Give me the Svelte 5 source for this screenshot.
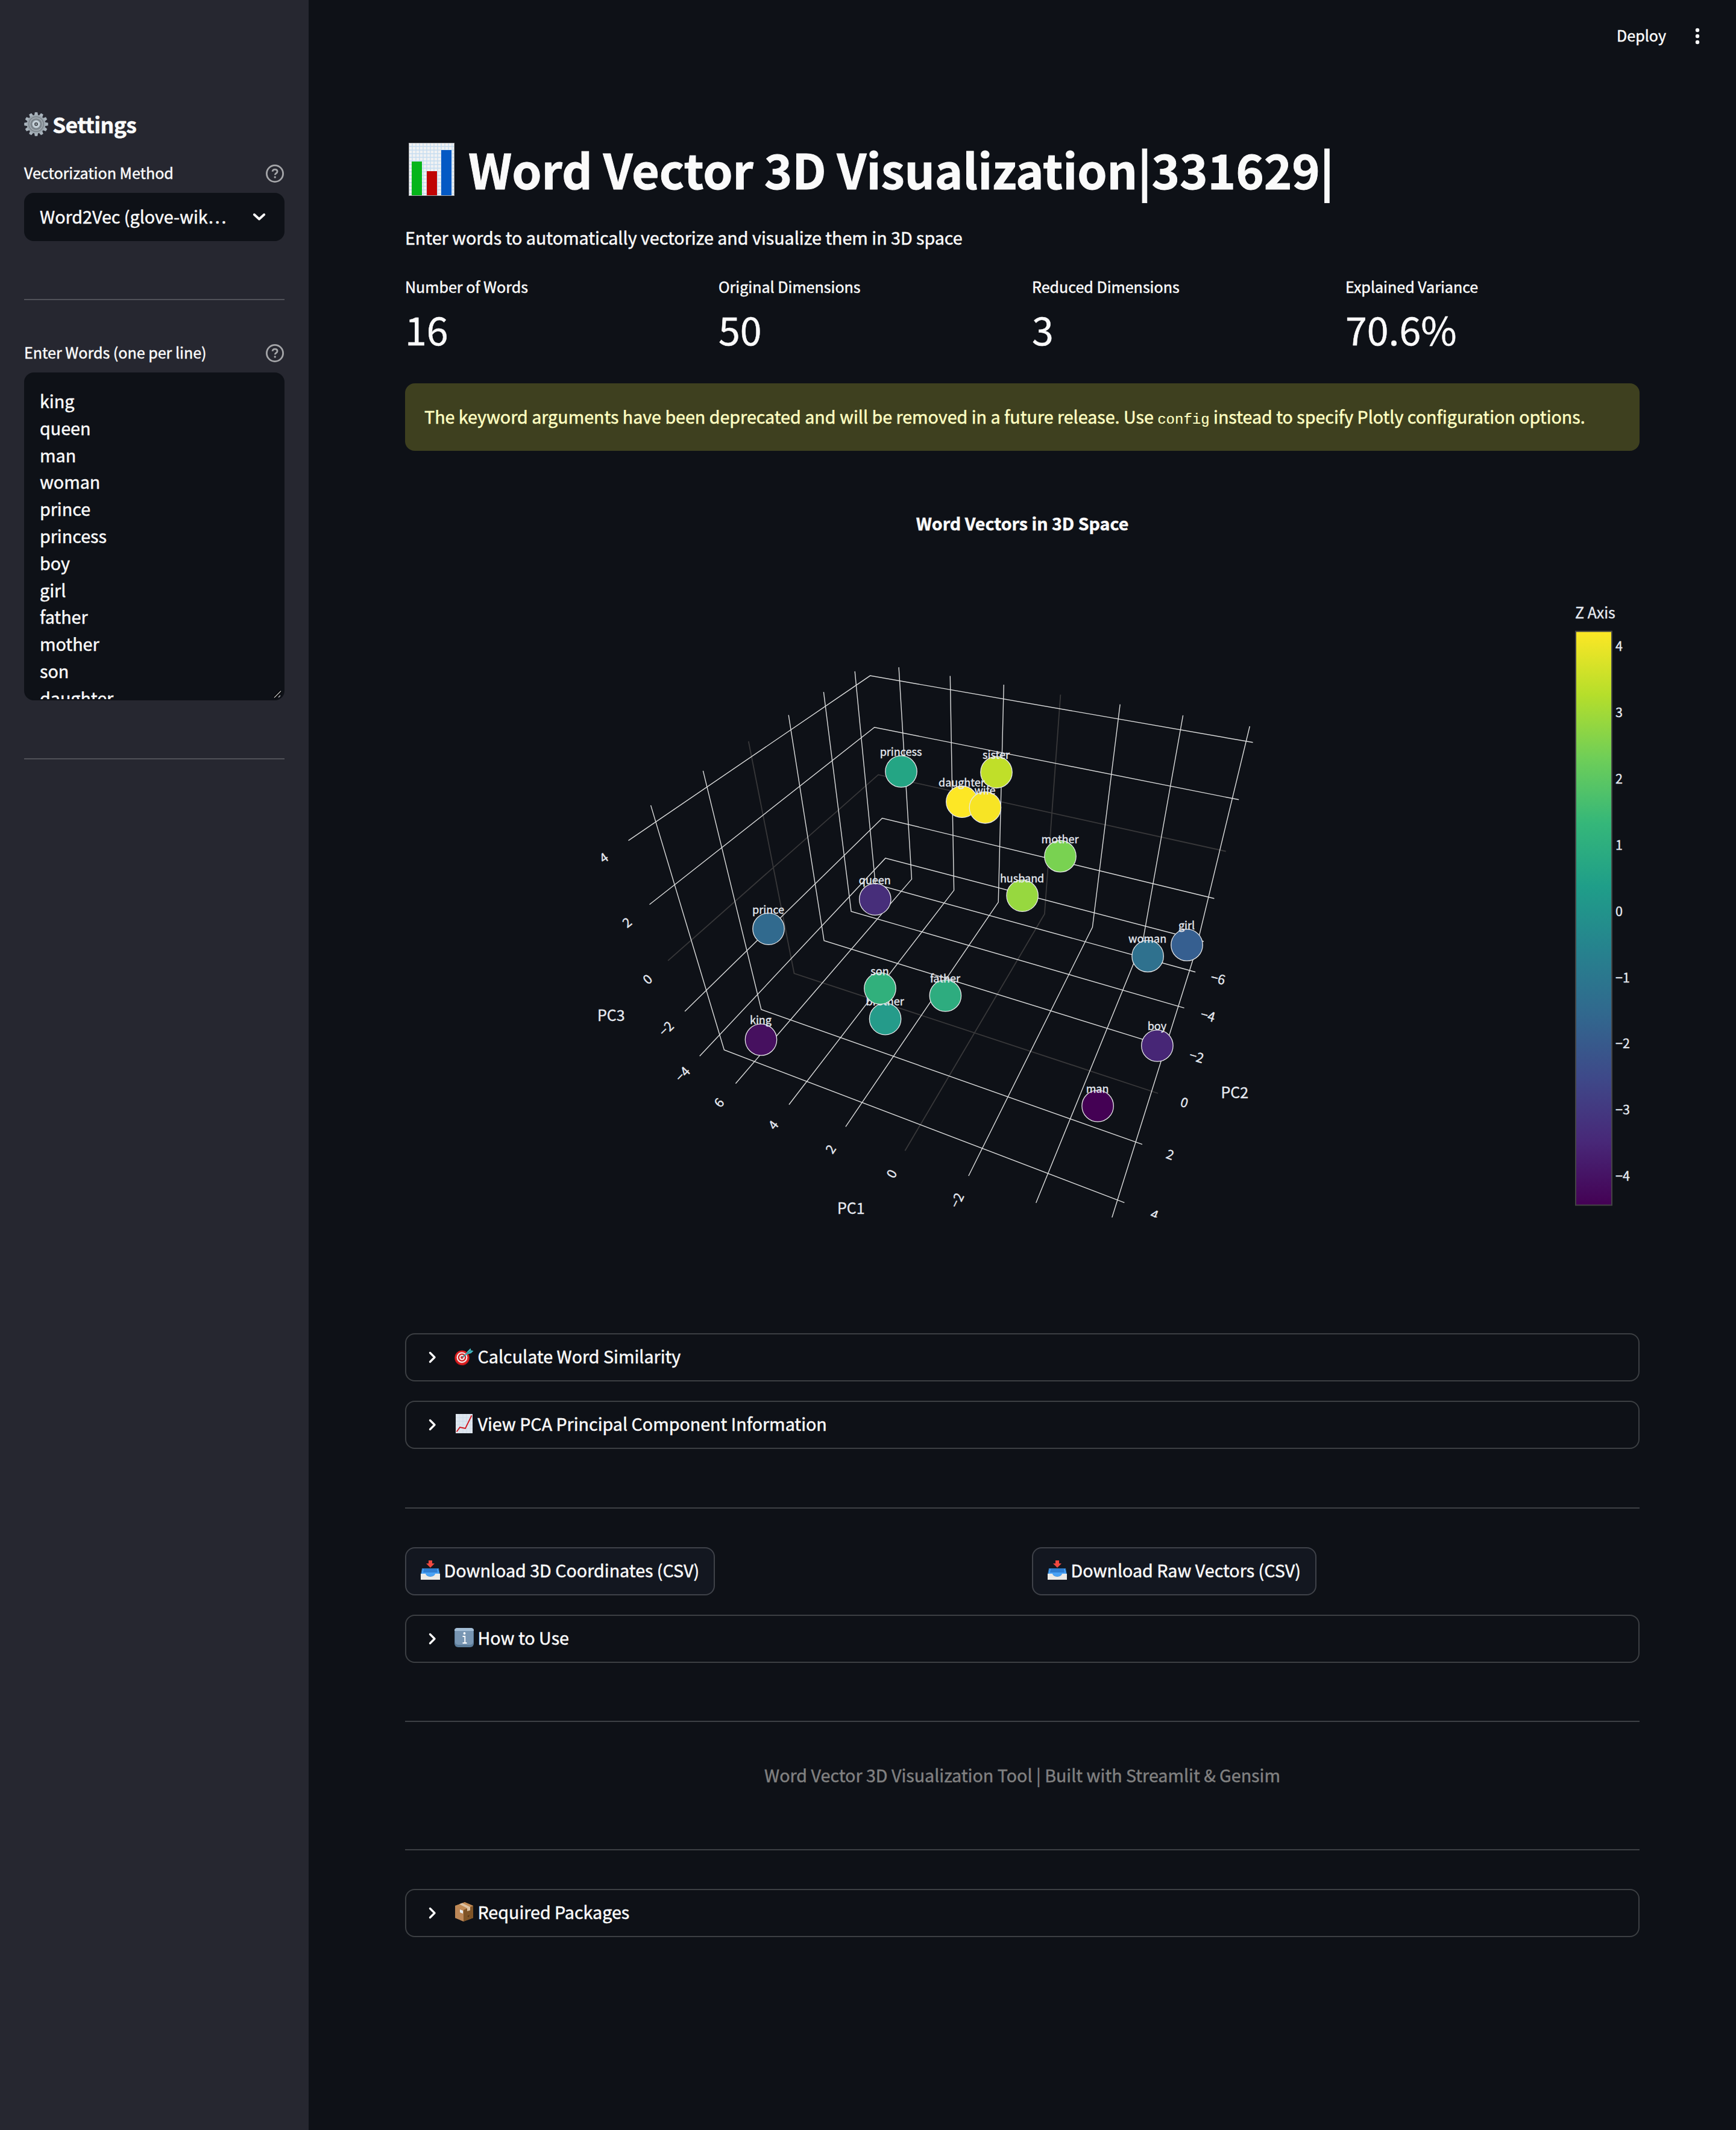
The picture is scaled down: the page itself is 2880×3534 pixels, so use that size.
<script>
  const words = ['king', 'queen', 'man', 'woman', 'prince', 'princess', 'boy', 'girl', 'father', 'mother', 'son', 'daughter'];

  const metrics = [
    { label: 'Number of Words', value: '16' },
    { label: 'Original Dimensions', value: '50' },
    { label: 'Reduced Dimensions', value: '3' },
    { label: 'Explained Variance', value: '70.6%' }
  ];

  // Grid lines of the three back planes; zero lines are drawn dark.
  const grid = [
    { zero: true, pts: '1108.2,1593.9 1457.1,1285.4 2033.8,1412.5' },
    { zero: true, pts: '1241.8,1230 1317.5,1615 1921.1,1814' },
    { zero: true, pts: '1759.4,1152.5 1732.9,1516.4 1501.4,1909.3' },
    { pts: '1042.5,1394.6 1443.6,1121.1 2078.5,1231.8' },
    { pts: '1077.5,1500.7 1450.7,1206.8 2055.2,1326.8' },
    { pts: '1136.1,1678 1463.6,1357.5 2014.4,1490.7' },
    { pts: '1160.7,1752.3 1468.9,1423.9 1997,1562' },
    { pts: '1079.6,1336.1 1201.4,1742 1865.4,1995.3' },
    { pts: '1166.4,1278.9 1262.9,1675 1895,1898.7' },
    { pts: '1308.2,1186.4 1367.1,1560.7 1944,1739.4' },
    { pts: '1366.4,1148.2 1412.1,1512.1 1964.6,1672.3' },
    { pts: '1418.2,1113.9 1452.3,1467 1983.2,1612.7' },
    { pts: '1491.1,1107.1 1512.5,1458.6 1220.4,1797.7' },
    { pts: '1576.3,1121.4 1582.6,1477.1 1308.9,1832.7' },
    { pts: '1665.3,1136.1 1656.2,1496.8 1402.9,1869.3' },
    { pts: '1858.2,1168.6 1812.4,1538.2 1606.8,1951' },
    { pts: '1962.6,1186.8 1896,1561 1718.7,1995.7' },
    { pts: '2073.3,1205 1982.3,1582 1844.8,2020' }
  ];

  const points = [
    { name: 'princess', x: 1495, y: 1280, c: '#24a584' },
    { name: 'sister', x: 1653, y: 1281.3, c: '#c0df29' },
    { name: 'daughter', x: 1595.9, y: 1330.2, c: '#fde725' },
    { name: 'wife', x: 1634.4, y: 1339.8, c: '#f7e425' },
    { name: 'mother', x: 1759, y: 1420.7, c: '#79d251' },
    { name: 'husband', x: 1696.1, y: 1486.1, c: '#97d83f' },
    { name: 'queen', x: 1451.8, y: 1492.1, c: '#472e7a' },
    { name: 'prince', x: 1275, y: 1541.1, c: '#316a8e' },
    { name: 'girl', x: 1969, y: 1567.9, c: '#365f90' },
    { name: 'woman', x: 1904.1, y: 1586.4, c: '#2f718e' },
    { name: 'brother', x: 1468.6, y: 1690.6, c: '#259b8a' },
    { name: 'son', x: 1460, y: 1640, c: '#31b07c' },
    { name: 'father', x: 1568.4, y: 1652, c: '#2eac7f' },
    { name: 'king', x: 1262.5, y: 1725, c: '#46105f' },
    { name: 'boy', x: 1919.9, y: 1735, c: '#472676' },
    { name: 'man', x: 1821.1, y: 1835, c: '#440154' }
  ];

  // Labels are centred on their ink box, so names with descenders sit higher.
  const lift = (name) => (/[gpqy]/.test(name) ? 25.6 : 22.2);

  const ticks = [
    { t: '4', x: 1001.5, y: 1422.9, r: -35 },
    { t: '2', x: 1040, y: 1530.2, r: -39 },
    { t: '0', x: 1074, y: 1624.6, r: -42 },
    { t: '−2', x: 1105.3, y: 1706.7, r: -44 },
    { t: '−4', x: 1132.4, y: 1782, r: -47 },
    { t: '6', x: 1192.6, y: 1829.3, r: -50 },
    { t: '4', x: 1282.8, y: 1866.3, r: -53 },
    { t: '2', x: 1378, y: 1906.3, r: -56 },
    { t: '0', x: 1479, y: 1947.3, r: -60 },
    { t: '−2', x: 1587.6, y: 1991.5, r: -64 },
    { t: '−6', x: 2020.7, y: 1623.5, r: 14 },
    { t: '−4', x: 2004, y: 1685, r: 16 },
    { t: '−2', x: 1985.2, y: 1753, r: 17 },
    { t: '0', x: 1965, y: 1829, r: 18 },
    { t: '2', x: 1941.3, y: 1915.5, r: 20 },
    { t: '4', x: 1915.2, y: 2015, r: 22 }
  ];

  const viridis = ['#fde725', '#b5de2b', '#6ece58', '#35b779', '#1f9e89', '#26828e', '#31688e', '#3e4989', '#482878', '#440154'];
  const barTicks = ['4', '3', '2', '1', '0', '−1', '−2', '−3', '−4'];
  const teeth = Array.from({ length: 12 }, (_, i) => i * 30);
</script>

{#snippet help()}
  <svg class="help" viewBox="0 0 32 32" width="32" height="32">
    <circle cx="16" cy="16" r="13.6" />
    <path d="M12 12.6c.3-2.200 1.900-3.500 4.100-3.500 2.400 0 4 1.300 4 3.300 0 1.700-1 2.500-2.100 3.300-1 .7-1.700 1.300-1.700 2.600" />
    <circle class="dot" cx="16.200" cy="22" r="1.700" />
  </svg>
{/snippet}

{#snippet icon(name)}
  <svg class="emoji" viewBox="0 0 32 32">
    {#if name === 'target'}
      <circle cx="12.500" cy="19" r="12.300" fill="#b9141a" />
      <circle cx="12.500" cy="18.300" r="11.500" fill="#dc2222" />
      <circle cx="12.500" cy="18.300" r="8.900" fill="#f4e9e9" />
      <circle cx="12.500" cy="18.300" r="6.700" fill="#d52020" />
      <circle cx="12.500" cy="18.300" r="4.500" fill="#f4e9e9" />
      <circle cx="12.500" cy="18.300" r="2.300" fill="#d52020" />
      <path d="M12.500 18.300 24 9" stroke="#3b8f96" stroke-width="1.800" />
      <path d="M18 12.500l4-5 4.500-4.500 1 3.500 4 .8-4 4-5 1.200-3.500 2z" fill="#44b5bd" />
      <path d="M20 12l8-5.500" stroke="#19737b" stroke-width="1" />
    {:else if name === 'trend'}
      <rect x="2" y="0" width="28" height="32" fill="#dfe7ef" />
      <path d="M2 6h28M2 12h28M2 18h28M2 24h28M8 0v32M14 0v32M20 0v32M26 0v32" stroke="#c9d9e8" stroke-width=".8" />
      <path d="M3.500 29.500 9 22l9 2L28.500 2.500" fill="none" stroke="#d0141c" stroke-width="1.800" />
    {:else if name === 'tray'}
      <path d="M2 13h28l2 10v8.500H0V23z" fill="#2b6fae" />
      <path d="M3 14h26l2 9-8 .5c-1 4-13 4-14 0L1 23z" fill="#4aa2f5" />
      <path d="M5 14h22l1 6H4z" fill="#2f7ed2" />
      <path d="M0 22h8c2 6.500 14 6.500 16 0h8v10H0z" fill="#eceae6" />
      <path d="M13 0h6v5h4l-7 7-7-7h4z" fill="#f0483f" />
    {:else if name === 'info'}
      <rect width="32" height="32" rx="6" fill="#5b7c9a" />
      <rect x="1" y="0" width="30" height="28" rx="5" fill="#7896b3" />
      <path d="M4 0h24a4 4 0 0 1 4 5H0a4 4 0 0 1 4-5z" fill="#a3bed6" />
      <circle cx="16.500" cy="9" r="1.900" fill="#fff" />
      <path d="M13.500 14h3.800v10.500M13.500 25h7" fill="none" stroke="#fff" stroke-width="1.800" />
    {:else if name === 'package'}
      <path d="M1 6 17 0l14 6v20L15 32 1 26z" fill="#b5814f" />
      <path d="M1 6 17 0l14 6-16 7z" fill="#c08a55" />
      <path d="M15 13 31 6v20l-16 6z" fill="#7f5427" />
      <path d="M1 6l14 7v19L1 26z" fill="#bd8858" />
      <path d="M8 3.200 12.500 1.600 26 8v5.500l-5 1.500v-5z" fill="#dcc3a6" />
      <path d="M9 12l5 2v5l-5-2z" fill="#e8eff2" />
      <path d="M21 23l4-2-1.500 4z" fill="#56371a" />
    {/if}
  </svg>
{/snippet}

{#snippet expander(name, label)}
  <div class="expander">
    <svg class="chev" viewBox="0 0 16 24" width="16" height="24"><path d="M3.500 4.500 11 12l-7.500 7.500" /></svg>
    {@render icon(name)}
    <span>{label}</span>
  </div>
{/snippet}

<div class="app">
  <aside>
    <h2>
      <svg class="gear" viewBox="-20 -20 40 40" width="40" height="40">
        {#each teeth as a}
          <path d="M-3.200-14 L-2.200-19.800 H2.200 L3.200-14z" transform="rotate({a})" fill="#a9b4bd" />
        {/each}
        <circle r="15.500" fill="#9ba5ad" />
        <circle r="13" fill="#7d868d" />
        <circle r="10.500" fill="none" stroke="#a4adb4" stroke-width="1.500" />
        <circle r="6.500" fill="#c4d0d8" />
        <circle r="3" fill="#4b4f54" />
        <circle r="1.200" fill="#a9b4bd" />
      </svg>
      <span>Settings</span>
    </h2>
    <div class="field-label"><span>Vectorization Method</span>{@render help()}</div>
    <div class="select">
      <span>Word2Vec (glove-wik…</span>
      <svg viewBox="0 0 24 16" width="24" height="16"><path d="M3.800 4 12 11.500 20.200 4" /></svg>
    </div>
    <hr />
    <div class="field-label"><span>Enter Words (one per line)</span>{@render help()}</div>
    <div class="textarea">
      {#each words as w}<div>{w}</div>{/each}
      <svg class="grip" viewBox="0 0 16 16" width="16" height="16">
        <path d="M2 13.500 13 2.500" stroke="#000" stroke-width="4" /><path d="M2 13.500 13 2.500M9 13l3-3" stroke="#b9babc" stroke-width="1.400" />
      </svg>
    </div>
    <hr />
  </aside>

  <main>
    <header>
      <span>Deploy</span>
      <svg viewBox="0 0 12 32" width="12" height="32"><circle cx="6" cy="6" r="3.200" /><circle cx="6" cy="16" r="3.200" /><circle cx="6" cy="26" r="3.200" /></svg>
    </header>

    <section class="content">
      <h1>
        <svg viewBox="0 0 76 88" width="76" height="88">
          <rect x=".5" y=".5" width="75" height="87" fill="#f1f2f3" stroke="#a8aaad" />
          {#each [6, 12, 18, 24, 30, 36, 42, 48, 54, 60, 66, 72] as g}
            <path d="M{g} 1V87M1 {g}H75" stroke="#c6ddf0" stroke-width="1.400" />
          {/each}
          <path d="M1 78H75M1 84H75" stroke="#c6ddf0" stroke-width="1.400" />
          <rect x="5" y="31" width="17" height="56" fill="#06b51a" />
          <rect x="30" y="47" width="17" height="40" fill="#c00404" />
          <rect x="54" y="12" width="17" height="75" fill="#0459c4" />
        </svg>
        <span>Word Vector 3D Visualization|331629|</span>
      </h1>
      <p class="lead">Enter words to automatically vectorize and visualize them in 3D space</p>

      <div class="metrics">
        {#each metrics as m}
          <div>
            <div class="m-label">{m.label}</div>
            <div class="m-value">{m.value}</div>
          </div>
        {/each}
      </div>

      <div class="alert">
        <p>The keyword arguments have been deprecated and will be removed in a future release. Use <code>config</code> instead to specify Plotly configuration options.</p>
      </div>

      <svg class="plot" viewBox="672 748 2048 1464" width="2048" height="1464">
        <defs>
          <linearGradient id="viridis" x1="0" y1="0" x2="0" y2="1">
            {#each viridis as c, i}<stop offset={i / 9} stop-color={c} />{/each}
          </linearGradient>
          <clipPath id="scene"><rect x="672" y="900" width="1930" height="1120" /></clipPath>
        </defs>
        <text class="title" x="1696" y="880">Word Vectors in 3D Space</text>
        <g clip-path="url(#scene)">
          {#each grid as l}<polyline class:zero={l.zero} points={l.pts} />{/each}
          {#each ticks as t}
            <text class="tick mid" transform="translate({t.x} {t.y}) rotate({t.r})" y="8">{t.t}</text>
          {/each}
          {#each points as p}
            <circle cx={p.x} cy={p.y} r="26.200" fill={p.c} />
            <text class="name" x={p.x - 0.5} y={p.y - lift(p.name)}>{p.name}</text>
          {/each}
        </g>
        <text class="axis" x="991" y="1694">PC3</text>
        <text class="axis" x="1389" y="2014">PC1</text>
        <text class="axis" x="2025.500" y="1822">PC2</text>
        <text class="axis" x="2613" y="1025.800">Z Axis</text>
        <rect x="2614" y="1047.500" width="60" height="952" fill="url(#viridis)" stroke="#444" stroke-width="2" />
        {#each barTicks as t, i}<text class="tick" x="2680" y={1080 + i * 109.900}>{t}</text>{/each}
      </svg>

      <div class="stack">
        {@render expander('target', 'Calculate Word Similarity')}
        {@render expander('trend', 'View PCA Principal Component Information')}
      </div>
      <hr class="wide" />
      <div class="downloads">
        <div><button>{@render icon('tray')}<span>Download 3D Coordinates (CSV)</span></button></div>
        <div><button>{@render icon('tray')}<span>Download Raw Vectors (CSV)</span></button></div>
      </div>
      {@render expander('info', 'How to Use')}
      <hr />
      <p class="credit">Word Vector 3D Visualization Tool | Built with Streamlit &amp; Gensim</p>
      <hr class="tight" />
      {@render expander('package', 'Required Packages')}
    </section>
  </main>
</div>

<style>
  :global(body) { margin: 0; background: #0e1117; }
  * { box-sizing: border-box; }
  .app {
    display: flex;
    width: 2880px;
    height: 3534px;
    overflow: hidden;
    background: #0e1117;
    color: #fafafa;
    font-family: "Noto Sans CJK SC", "Noto Sans", sans-serif;
    font-size: 28.65px;
    white-space: nowrap;
    -webkit-text-stroke: 0.5px currentColor;
  }
  h1, h2, p { margin: 0; }
  svg { flex: none; display: block; }
  hr { margin: 96px 0 64px; border: 0; height: 2px; background: #3d4045; }
  hr.wide { margin-top: 97px; }

  aside { width: 512px; padding: 182px 40px 0; background: #262730; flex: none; }
  aside hr { background: #505158; margin: 96px 0 66px; }
  h2 { display: flex; gap: 7px; height: 48px; font-size: 35.500px; line-height: 48px; font-weight: 700; letter-spacing: -0.55px; margin-bottom: 36px; }
  .gear { margin-top: 4px; }
  .field-label { display: flex; justify-content: space-between; height: 40px; line-height: 40px; font-size: 25.05px; margin-bottom: 14px; }
  .help { fill: none; stroke: #a5a6a9; stroke-width: 2.800; margin-top: 6px; }
  .help .dot { fill: #a5a6a9; stroke: none; }
  .select { display: flex; justify-content: space-between; height: 80px; padding: 0 30px 0 26px; background: #0e1117; border-radius: 16px; line-height: 78px; }
  .select svg { margin-top: 32px; fill: none; stroke: #fafafa; stroke-width: 3.900; stroke-linecap: round; stroke-linejoin: round; }
  .textarea { position: relative; height: 544px; padding: 23px 24px 0; border: 2px solid #0e1117; border-radius: 16px; background: #0e1117; overflow: hidden; line-height: 44.8px; }
  .grip { position: absolute; right: 1px; bottom: 0; fill: none; }

  main { flex: 1; }
  header { display: flex; justify-content: flex-end; align-items: center; gap: 46px; height: 120px; padding-right: 58px; font-size: 25.05px; }
  header svg { fill: #fafafa; }
  header span { line-height: 40px; margin-top: -4px; }
  .content { padding: 109px 160px 0; }
  h1 { display: flex; gap: 24px; height: 100px; padding-left: 6px; line-height: 102px; font-size: 79px; font-weight: 700; letter-spacing: -0.06px; -webkit-text-stroke-width: 0.9px; }
  h1 svg { margin-top: 8px; }
  h1 span { margin-left: -1px; }
  .lead { margin-top: 41px; height: 48px; line-height: 48px; }
  .metrics { display: grid; grid-template-columns: repeat(4, 1fr); gap: 32px; margin-top: 37px; }
  .m-label { height: 40px; line-height: 40px; font-size: 25.05px; }
  .m-value { height: 90px; line-height: 90px; font-size: 64.500px; margin-top: 5px; }
  .alert { height: 112px; margin-top: 46px; padding-left: 32px; border-radius: 16px; background: #3e401f; color: #ffffc2; line-height: 110px; }
  .alert code { font-family: "Liberation Mono", monospace; font-size: 24px; line-height: 1; -webkit-text-stroke-width: 0.2px; }
  .alert p { font-size: 28.65px; }

  .plot { font-family: inherit; -webkit-text-stroke: 0; }
  .plot polyline { fill: none; stroke: #dcdddd; stroke-width: 1.400; }
  .plot polyline.zero { stroke: #38383a; stroke-width: 1.800; }
  .plot circle { stroke: #e8e9ea; stroke-width: 1.300; }
  .plot text { fill: #e6eaf1; stroke: #e6eaf1; stroke-width: 0.35px; }
  .plot .title { font-size: 28.6px; font-weight: 700; text-anchor: middle; fill: #fafafa; stroke: #fafafa; stroke-width: 0.5px; }
  .plot .name { font-size: 18px; text-anchor: middle; }
  .plot .tick { font-size: 21.500px; }
  .plot .mid { text-anchor: middle; }
  .plot .axis { font-size: 25px; }

  .stack { display: grid; gap: 32px; }
  .expander { display: flex; height: 80px; padding-left: 36px; border: 2px solid #3c3f43; border-radius: 16px; line-height: 71px; }
  .chev { margin: 26px 28px 0 0; fill: none; stroke: #fafafa; stroke-width: 3.400; stroke-linecap: round; stroke-linejoin: round; }
  .emoji { width: 32px; height: 32px; margin: 20px 6.500px 0 0; }
  .downloads { display: grid; grid-template-columns: 1fr 1fr; gap: 32px; margin-bottom: 32px; }
  .downloads > div { display: flex; }
  button { display: inline-flex; height: 80px; padding: 0 24px; border: 2px solid #3f4249; border-radius: 16px; background: #131720; color: #fafafa; font: inherit; line-height: 71px; -webkit-text-stroke: inherit; }
  .credit { height: 115px; line-height: 48px; text-align: center; color: #808080; }
  hr.tight { margin-top: 32px; }
</style>
